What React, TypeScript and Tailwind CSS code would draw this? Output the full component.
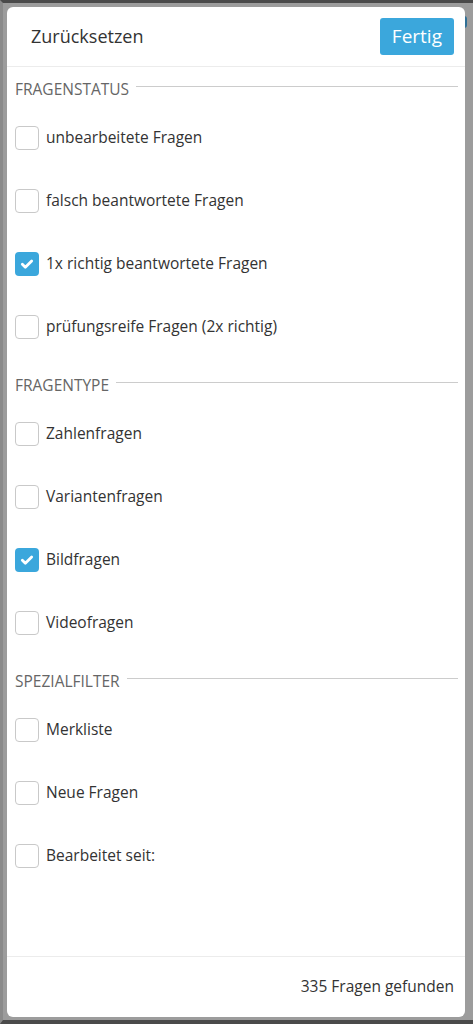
import React from 'react';

type Item = { label: string; checked?: boolean };
type Section = { title: string; items: Item[] };

const sections: Section[] = [
  {
    title: 'Fragenstatus',
    items: [
      { label: 'unbearbeitete Fragen' },
      { label: 'falsch beantwortete Fragen' },
      { label: '1x richtig beantwortete Fragen', checked: true },
      { label: 'prüfungsreife Fragen (2x richtig)' },
    ],
  },
  {
    title: 'Fragentype',
    items: [
      { label: 'Zahlenfragen' },
      { label: 'Variantenfragen' },
      { label: 'Bildfragen', checked: true },
      { label: 'Videofragen' },
    ],
  },
  {
    title: 'Spezialfilter',
    items: [{ label: 'Merkliste' }, { label: 'Neue Fragen' }, { label: 'Bearbeitet seit:' }],
  },
];

const Checkbox: React.FC<{ checked?: boolean }> = ({ checked }) =>
  checked ? (
    <span className="flex h-[24px] w-[24px] shrink-0 items-center justify-center rounded-[4px] bg-[#3ba7dc]">
      <svg viewBox="0 0 24 24" className="h-[16px] w-[16px]" fill="none" stroke="#fff" strokeWidth="4.2" strokeLinecap="round" strokeLinejoin="round">
        <path d="M5 12.5l4.5 4.5L19 7.5" />
      </svg>
    </span>
  ) : (
    <span className="block h-[24px] w-[24px] shrink-0 rounded-[4px] border border-[#c9c9c9] bg-white" />
  );

export default function App() {
  return (
    <div
      className="relative h-[1024px] w-full overflow-hidden border-t-[3px] border-b-[4px] border-l-[3px] border-t-[#4a4a4a] border-b-[#4a4a4a] border-l-[#8a8a8a] bg-[#9c9c9c] pl-[4px] pr-[8px] pt-[4px] pb-[3px]"
      style={{ fontFamily: '"Open Sans", "Liberation Sans", sans-serif' }}
    >
      {/* sliver of the page behind the overlay */}
      <span className="absolute right-[6px] top-[13px] h-[12px] w-[6px] rounded-full bg-[#2f6f96]" />

      <div className="relative flex h-full flex-col rounded-[6px] bg-white">
        <header className="flex h-[60px] shrink-0 items-center justify-between border-b border-[#ececec] pl-[24px] pr-[11px]">
          <span className="text-[18px] text-[#333]">Zurücksetzen</span>
          <button className="h-[37px] rounded-[3px] bg-[#3ba7dc] px-[12px] text-[19px] text-white">Fertig</button>
        </header>

        <div className="flex-1 pl-[8px] pr-[7px] pt-[8px]">
          {sections.map((s, i) => (
            <section key={s.title} className={i > 0 ? 'mt-[13px]' : ''}>
              <div className="mb-[1px] flex h-[30px] items-center gap-[7px]">
                <span className="text-[15.5px] uppercase text-[#666]">{s.title}</span>
                <span className="mb-[8px] h-px flex-1 bg-[#cccccc]" />
              </div>
              {s.items.map((it) => (
                <label key={it.label} className="flex h-[63px] items-center gap-[7px]">
                  <Checkbox checked={it.checked} />
                  <span className="text-[15.5px] text-[#333]">{it.label}</span>
                </label>
              ))}
            </section>
          ))}
        </div>

        <footer className="flex h-[61px] shrink-0 items-center justify-end border-t border-[#ececec] pr-[11px]">
          <span className="text-[15.5px] text-[#333]">335 Fragen gefunden</span>
        </footer>
      </div>
    </div>
  );
}
